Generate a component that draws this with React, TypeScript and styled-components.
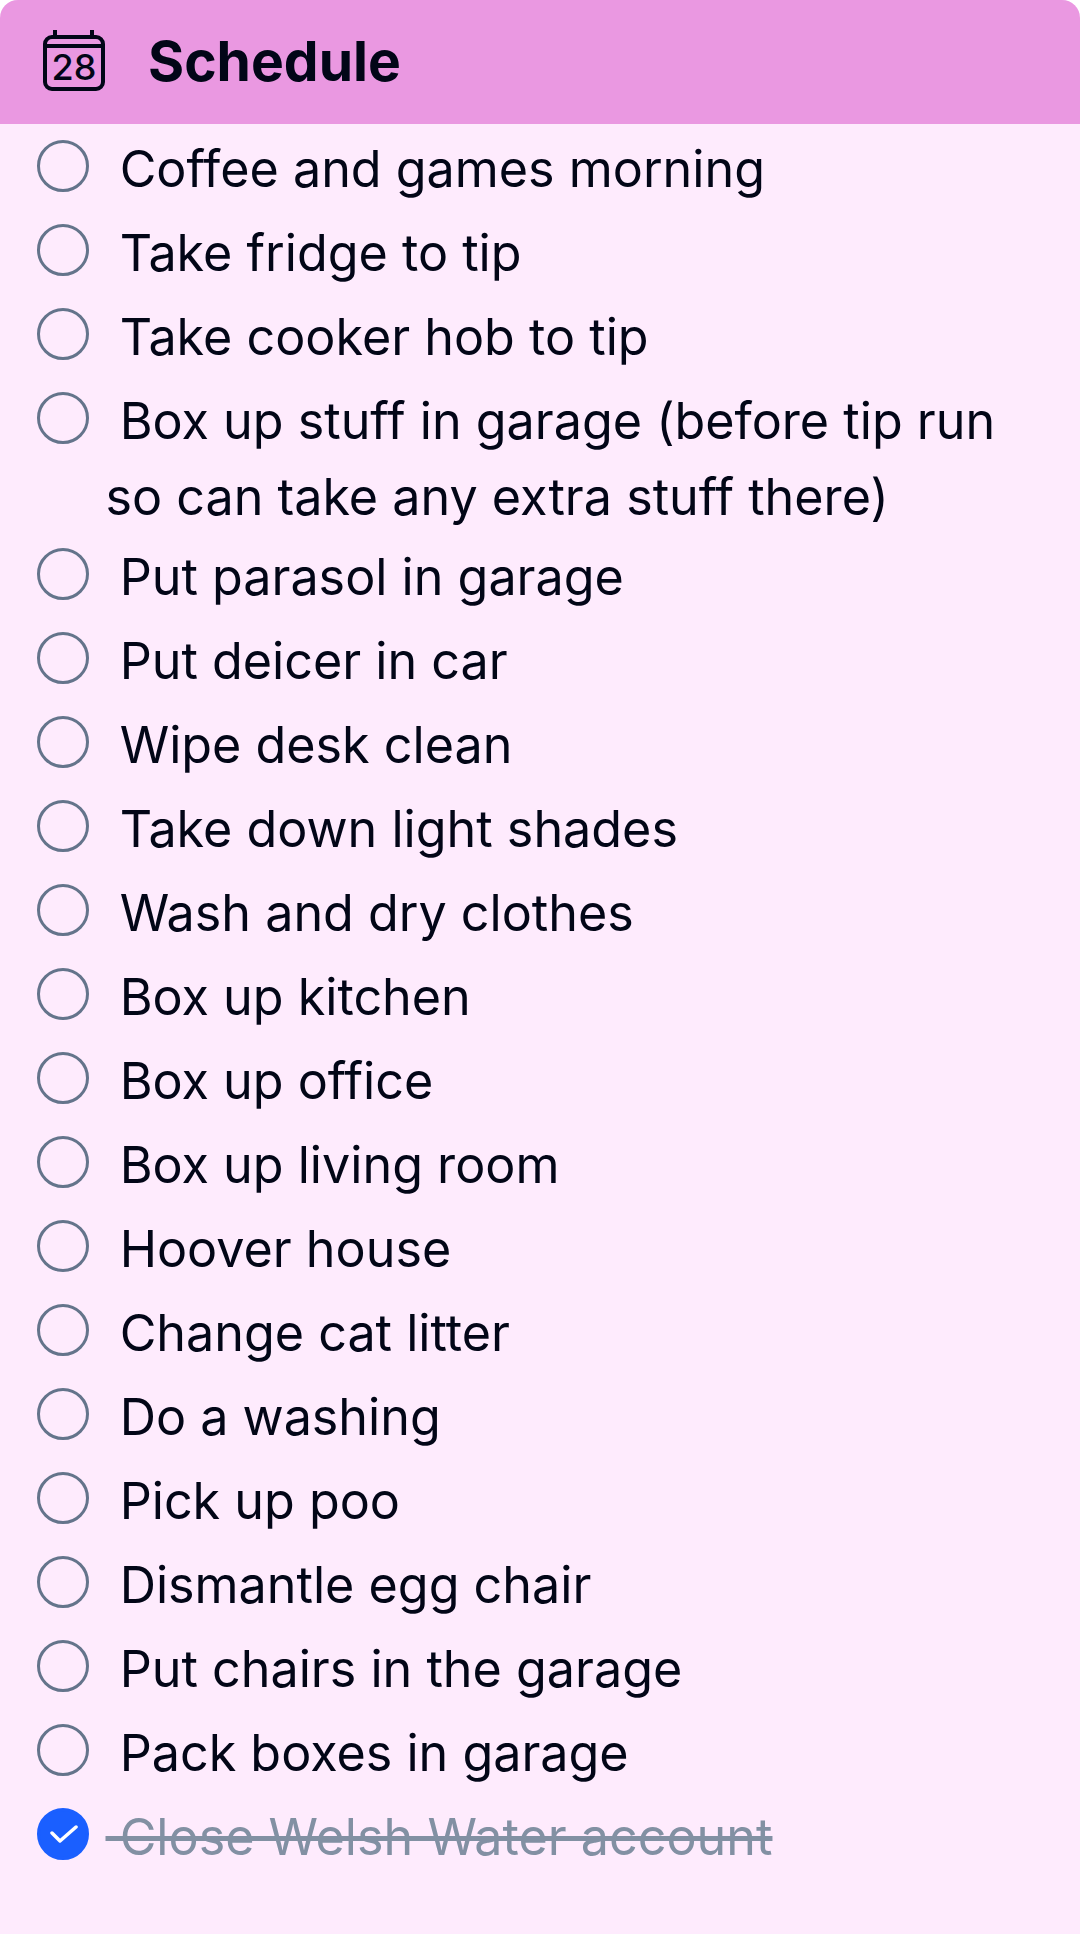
import React from "react"
import styled, { createGlobalStyle } from "styled-components"

const tasks = [
	{ text: "Coffee and games morning" },
	{ text: "Take fridge to tip" },
	{ text: "Take cooker hob to tip" },
	{ text: "Box up stuff in garage (before tip run so can take any extra stuff there)", wrapped: true },
	{ text: "Put parasol in garage" },
	{ text: "Put deicer in car" },
	{ text: "Wipe desk clean" },
	{ text: "Take down light shades" },
	{ text: "Wash and dry clothes" },
	{ text: "Box up kitchen" },
	{ text: "Box up office" },
	{ text: "Box up living room" },
	{ text: "Hoover house" },
	{ text: "Change cat litter" },
	{ text: "Do a washing" },
	{ text: "Pick up poo" },
	{ text: "Dismantle egg chair" },
	{ text: "Put chairs in the garage" },
	{ text: "Pack boxes in garage" },
]

const GlobalStyle = createGlobalStyle`
	html,
	body {
		margin: 0;
		padding: 0;
		background: #ffffff;
	}
	body {
		font-family: Inter, "Liberation Sans", sans-serif;
		color: #020617;
	}
`

const Card = styled.section`
	width: 1080px;
	height: 1934px;
	background: #feebfd;
	border-radius: 18px 18px 0 0;
	overflow: hidden;
`

const Header = styled.header`
	display: flex;
	align-items: center;
	gap: 42px;
	height: 124px;
	padding-left: 42px;
	background: #ea98e1;
`

const Title = styled.h2`
	margin: 0;
	font-size: 55.2px;
	line-height: 1;
	font-weight: 700;
`

const IconBox = styled.span`
	display: flex;
	margin-top: -2px;
`

const TaskList = styled.ul`
	list-style: none;
	margin: 0;
	padding: 3px 36px 0 37px;
`

const Task = styled.li<{ $wrapped?: boolean }>`
	position: relative;
	padding: 4px 0 ${(p) => (p.$wrapped ? "0" : "4px")} 68.5px;
	font-size: 50.25px;
	line-height: 76px;
`

const Circle = styled.span<{ $done?: boolean }>`
	position: absolute;
	left: 0;
	top: 13px;
	display: flex;
	align-items: center;
	justify-content: center;
	box-sizing: border-box;
	width: 52px;
	height: 52px;
	border-radius: 50%;
	border: 3px solid ${(p) => (p.$done ? "#1a5fff" : "#64748b")};
	background: ${(p) => (p.$done ? "#1a5fff" : "transparent")};
`

const Label = styled.span<{ $done?: boolean }>`
	color: ${(p) => (p.$done ? "#8290a3" : "inherit")};
	text-decoration: ${(p) => (p.$done ? "line-through" : "none")};
`

const CalendarIcon = () => (
	<svg width="64" height="64" viewBox="0 0 64 64" fill="none" stroke="#020617" strokeWidth="4">
		<rect x="3" y="8" width="58" height="52" rx="7" />
		<path d="M3 17H61M13 1V8M50 1V8" />
		<text x="32" y="51" fill="#020617" stroke="none" fontFamily="Inter, sans-serif" fontSize="36" fontWeight="500" textAnchor="middle">
			28
		</text>
	</svg>
)

const CheckIcon = () => (
	<svg width="30" height="30" viewBox="0 0 30 30" fill="none" stroke="#ffffff" strokeWidth="3.5" strokeLinecap="round" strokeLinejoin="round">
		<path d="M4 14L12 22L28 8" />
	</svg>
)

const App: React.FC = () => {
	return (
		<>
			<GlobalStyle />
			<Card>
				<Header>
					<IconBox>
						<CalendarIcon />
					</IconBox>
					<Title>Schedule</Title>
				</Header>
				<TaskList>
					{tasks.map((task) => (
						<Task key={task.text} $wrapped={task.wrapped}>
							<Circle />
							<Label>{"\u00a0" + task.text}</Label>
						</Task>
					))}
					<Task>
						<Circle $done>
							<CheckIcon />
						</Circle>
						<Label $done>{"\u00a0Close Welsh Water account"}</Label>
					</Task>
				</TaskList>
			</Card>
		</>
	)
}

export default App
